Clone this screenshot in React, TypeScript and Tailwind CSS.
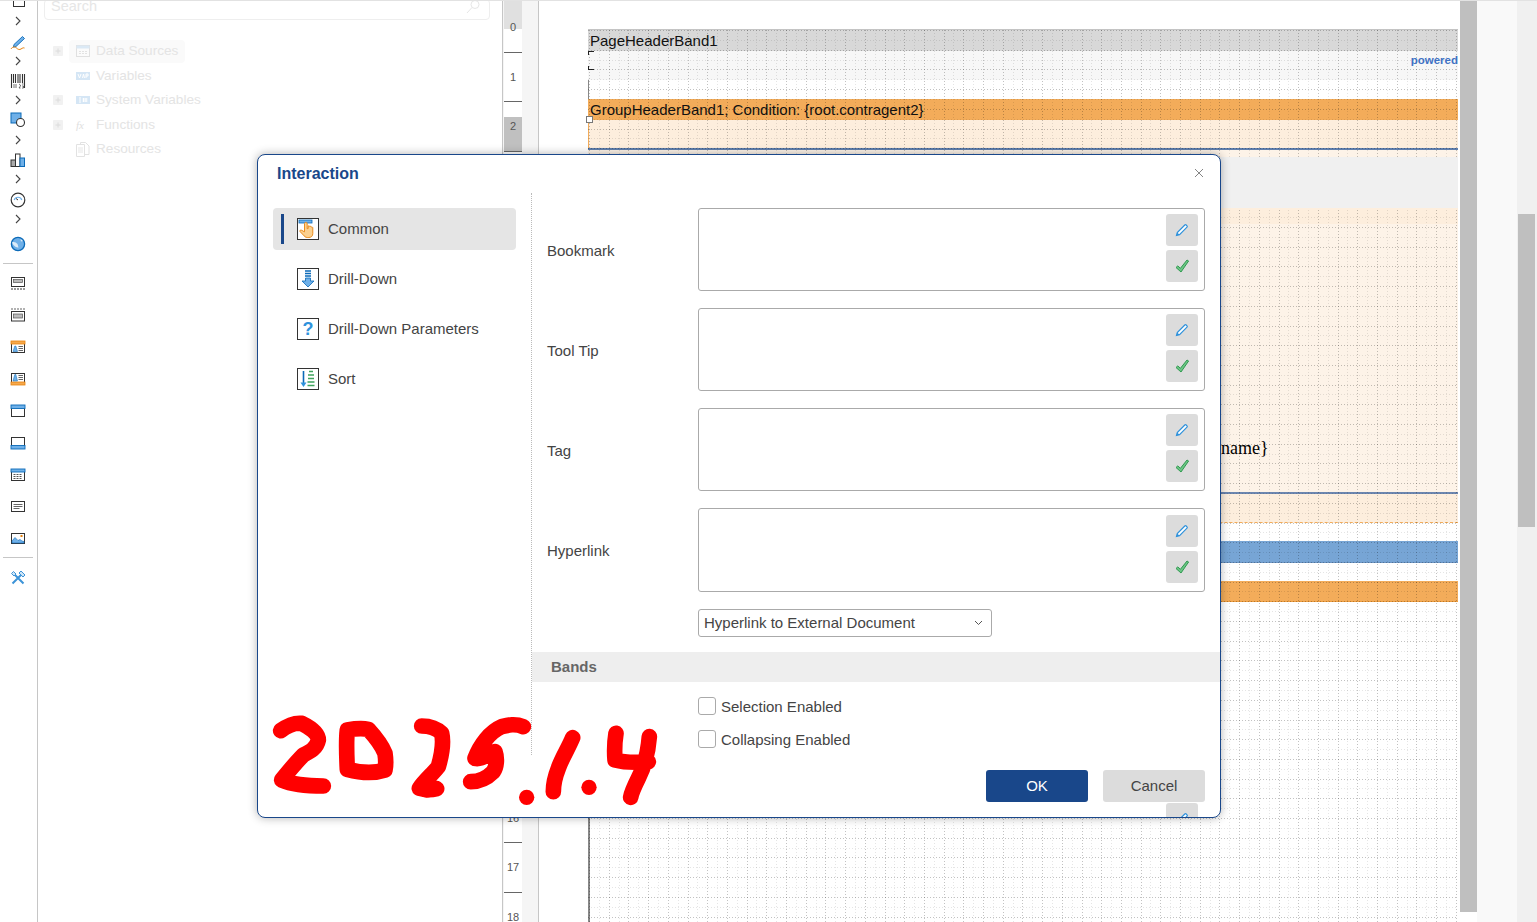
import React from "react";

const font = "font-['Liberation_Sans',Arial,sans-serif]";

function Chevron() {
  return (
    <svg width="8" height="10" viewBox="0 0 8 10" fill="none" className="shrink-0">
      <path d="M2 1l4 4-4 4" stroke="#444" strokeWidth="1.1" />
    </svg>
  );
}
const D = "#333";
const B = "#0b6ab8";
const L = "#6fb0e8";
const O = "#e8820c";

function Ic({ children }: { children: React.ReactNode }) {
  return (
    <svg width="16" height="16" viewBox="0 0 16 16" fill="none" className="block shrink-0">
      {children}
    </svg>
  );
}
const toolTop = (
  <svg width="16" height="16" viewBox="0 0 16 16" fill="none" className="block">
    <rect x="3.5" y="4.5" width="11" height="10" fill="#fff" stroke={D} />
    <path d="M0.5 6v-2.5h3v-3" stroke={D} />
  </svg>
);
const pen = (
  <Ic>
    <path d="M4 9.5L12.5 1.5l2 2L6 11.5l-2.6.6z" fill={L} stroke={B} strokeWidth="0.9" />
    <path d="M1 14c1.5-2.5 4-2.5 5.5-1s3 2 4.5 1 2.5-1.5 3.5-1" stroke={O} strokeWidth="1" />
  </Ic>
);
const barcode = (
  <Ic>
    <path d="M1.5 1v14M3.5 1v9M5.5 1v9M8 1v9M10 1v9M12.5 1v9M14.5 1v14" stroke={D} strokeWidth="1.1" />
    <path d="M4 11v4M6 11v4M9 11l1.4 1v1l-1.4 2h1.5M12 11h1.5M12 13h1.5v2H12" stroke={D} strokeWidth="0.7" />
  </Ic>
);
const shape = (
  <Ic>
    <rect x="1" y="1" width="10" height="10" fill={L} stroke={B} />
    <circle cx="10.5" cy="10.5" r="4" fill="#fff" stroke={D} strokeWidth="1.1" />
  </Ic>
);
const chart = (
  <Ic>
    <rect x="1" y="8" width="4.5" height="6.5" fill="#aaa" stroke={D} />
    <rect x="5.5" y="2" width="4.5" height="12.5" fill="#fff" stroke={D} />
    <rect x="10" y="6" width="4.5" height="8.5" fill={L} stroke={B} />
  </Ic>
);
const gauge = (
  <Ic>
    <circle cx="8" cy="8" r="6.8" stroke={D} strokeWidth="1.2" />
    <path d="M4.2 8a4 4 0 0 1 7.6 0" stroke={L} strokeWidth="1.2" />
    <path d="M8 8L6 6.5" stroke={D} />
  </Ic>
);
const globe = (
  <Ic>
    <circle cx="8" cy="8" r="6.6" fill={L} stroke={B} strokeWidth="1.3" />
    <path d="M2 6.5c2-1 4 0 5.5 1.5l1 3.5c-2 0-5-1-6.5-5z" fill="#dcecf8" />
    <path d="M10.5 3l2.5 2-2 .5z" fill="#dcecf8" />
  </Ic>
);
const bandA = (
  <Ic>
    <rect x="1.5" y="2.5" width="13" height="9" fill="#fff" stroke={D} />
    <rect x="3.5" y="4.5" width="9" height="3" fill="#bbb" stroke="#555" strokeWidth="0.7" />
    <path d="M1 14h14" stroke={D} strokeDasharray="2 1" strokeWidth="1.2" />
  </Ic>
);
const bandB = (
  <Ic>
    <path d="M1 2h14" stroke="#666" strokeDasharray="2 1" strokeWidth="1.2" />
    <rect x="1.5" y="4.5" width="13" height="9.5" fill="#fff" stroke={D} />
    <rect x="3.5" y="7" width="9" height="4" fill="#bbb" stroke="#555" strokeWidth="0.7" />
  </Ic>
);
const cardTop = (
  <Ic>
    <rect x="1.5" y="2.5" width="13" height="11" fill="#fff" stroke={D} />
    <rect x="1" y="2" width="14" height="3" fill="#f5a94e" stroke={O} strokeWidth="0.8" />
    <path d="M3 12.5l1.8-5.5h1L7.5 12.5z" fill={L} stroke={B} strokeWidth="0.5" />
    <path d="M8.5 7.5h4.5M8.5 9.5h4.5M8.5 11.5h4.5" stroke="#666" />
  </Ic>
);
const cardBottom = (
  <Ic>
    <rect x="1.5" y="2.5" width="13" height="11" fill="#fff" stroke={D} />
    <rect x="1" y="11" width="14" height="3" fill="#f5a94e" stroke={O} strokeWidth="0.8" />
    <path d="M3 10l1.8-6.5h1L7.5 10z" fill={L} stroke={B} strokeWidth="0.5" />
    <path d="M8.5 4.5h4.5M8.5 6.5h4.5M8.5 8.5h4.5" stroke="#666" />
  </Ic>
);
const winTop = (
  <Ic>
    <rect x="1.5" y="2.5" width="13" height="11" fill="#fff" stroke={D} />
    <rect x="1" y="2" width="14" height="3.5" fill={L} stroke={B} strokeWidth="0.9" />
  </Ic>
);
const winBottom = (
  <Ic>
    <rect x="1.5" y="2.5" width="13" height="11" fill="#fff" stroke={D} />
    <rect x="1" y="10.5" width="14" height="3.5" fill={L} stroke={B} strokeWidth="0.9" />
  </Ic>
);
const table = (
  <Ic>
    <rect x="1.5" y="2.5" width="13" height="11" fill="#fff" stroke={D} />
    <rect x="1" y="2" width="14" height="3" fill={L} stroke={B} strokeWidth="0.9" />
    <path d="M3.5 7.5h9M3.5 9.5h9M3.5 11.5h9" stroke="#555" strokeDasharray="2 1" />
  </Ic>
);
const textIc = (
  <Ic>
    <rect x="1.5" y="2.5" width="13" height="10" fill="#fff" stroke={D} />
    <path d="M3.5 5.5h9M3.5 7.5h9M3.5 9.5h6" stroke="#666" />
  </Ic>
);
const image = (
  <Ic>
    <rect x="1.5" y="2.5" width="13" height="10" fill="#fff" stroke={D} />
    <path d="M2 12v-2l3-3.5 3 3 2-1 2 1.5 2 .5V12z" fill={L} stroke={B} strokeWidth="0.6" />
    <rect x="10.5" y="4" width="2" height="2" fill={O} />
  </Ic>
);
const tools = (
  <Ic>
    <path d="M2.5 13.5L11 5M13.5 13.5L5 5" stroke="#3d94d8" strokeWidth="2" />
    <path d="M9 3l2-2 4 4-2 2zM1.5 3.5L3.5 1.5 6 4 4 6z" fill="#cfe5f6" stroke="#3d94d8" strokeWidth="1" />
  </Ic>
);

function IconCell({ h, children }: { h: string; children: React.ReactNode }) {
  return <div className={`${h} flex items-center justify-center w-full shrink-0`}>{children}</div>;
}

function Toolbar() {
  return (
    <div className="w-[38px] shrink-0 h-full border-r border-[#c6c6c6] flex flex-col items-center overflow-hidden pr-px">
      <div className="-mt-[8px] h-[16px] shrink-0">{toolTop}</div>
      <IconCell h="h-[26px]"><Chevron /></IconCell>
      <IconCell h="h-[18px]">{pen}</IconCell>
      <IconCell h="h-[18px]"><Chevron /></IconCell>
      <IconCell h="h-[22px]">{barcode}</IconCell>
      <IconCell h="h-[16px]"><Chevron /></IconCell>
      <IconCell h="h-[24px]">{shape}</IconCell>
      <IconCell h="h-[16px]"><Chevron /></IconCell>
      <IconCell h="h-[24px]">{chart}</IconCell>
      <IconCell h="h-[14px]"><Chevron /></IconCell>
      <IconCell h="h-[28px]">{gauge}</IconCell>
      <IconCell h="h-[10px]"><Chevron /></IconCell>
      <IconCell h="h-[39px]">{globe}</IconCell>
      <div className="w-[30px] h-px bg-[#c6c6c6] -ml-px shrink-0" />
      <div className="flex flex-col mt-[3px] w-full">
        {[bandA, bandB, cardTop, cardBottom, winTop, winBottom, table, textIc, image].map((ic, i) => (
          <IconCell key={i} h="h-[32px]">{ic}</IconCell>
        ))}
      </div>
      <div className="w-[30px] h-px bg-[#c6c6c6] -ml-px mt-[2px] shrink-0" />
      <IconCell h="h-[40px]">{tools}</IconCell>
    </div>
  );
}

function Plus() {
  return (
    <svg width="10" height="10" viewBox="0 0 10 10" className="block">
      <rect width="10" height="10" rx="1" fill="#f1f1f1" />
      <path d="M2.5 5h5M5 2.5v5" stroke="#dcdcdc" />
    </svg>
  );
}
const treeIcons: Record<string, React.ReactNode> = {
  ds: (
    <svg width="15" height="13" viewBox="0 0 15 13" fill="none">
      <rect x="0.5" y="0.5" width="13" height="11" fill="#fbfbfb" stroke="#e0e0e0" />
      <rect x="0.5" y="0.5" width="13" height="3" fill="#dbe9f5" />
      <path d="M3 6.5h8M3 8.5h8" stroke="#e2e2e2" strokeDasharray="2 1" />
    </svg>
  ),
  v: (
    <svg width="15" height="10" viewBox="0 0 15 10">
      <rect width="14" height="8" y="1" fill="#d5e6f5" />
      <path d="M2 3l1.5 4L5 3M6.5 7l1-4 1 4M10 7V3h2v2h-2" stroke="#fff" fill="none" />
    </svg>
  ),
  sv: (
    <svg width="15" height="10" viewBox="0 0 15 10">
      <rect width="14" height="8" y="1" fill="#d5e6f5" />
      <path d="M3 3h2M3 5h2M3 7h2M7.5 3v4M10 3v4M6.5 4h5M6.5 6h5" stroke="#fff" fill="none" />
    </svg>
  ),
  fx: <span className="font-['Liberation_Serif',serif] italic text-[11px] text-[#e0e0e0]">fx</span>,
  res: (
    <svg width="14" height="15" viewBox="0 0 14 15" fill="none">
      <path d="M4.5 2.5v-2h5l3.5 3.5v8.5h-4M0.5 2.5h8v12h-8z" stroke="#e2e2e2" />
      <path d="M2 6h5M2 8h5M2 10h5" stroke="#e6e6e6" />
    </svg>
  ),
};

function TreeRow({ plus, icon, label, selected }: { plus?: boolean; icon: string; label: string; selected?: boolean }) {
  return (
    <div className="h-[24.5px] flex items-center relative">
      <div className="w-[10px] ml-[15px] shrink-0">{plus && <Plus />}</div>
      <div className={`ml-[6px] h-[23px] pl-[7px] pr-[7px] flex items-center rounded-sm ${selected ? "bg-[#fafafa]" : ""}`}>
        <div className="w-[20px] shrink-0 flex items-center">{treeIcons[icon]}</div>
        <span className="text-[13.6px] text-[#e4e4e4]">{label}</span>
      </div>
    </div>
  );
}

function SidePanel() {
  return (
    <div className="w-[464px] shrink-0 h-full relative">
      <div className="ml-[6px] mr-[12px] h-[21px] border border-[#eeeeee] rounded-[4px] flex items-center justify-between pl-[6px] pr-[8px] -mt-px pb-[5px] overflow-hidden">
        <span className="text-[14.5px] text-[#e6e6e6]">Search</span>
        <svg width="16" height="16" viewBox="0 0 16 16" fill="none">
          <circle cx="10" cy="5.5" r="4" stroke="#e6e6e6" />
          <path d="M7 8.5L2 14" stroke="#e6e6e6" />
        </svg>
      </div>
      <div className="pt-[19px]">
        <TreeRow plus icon="ds" label="Data Sources" selected />
        <TreeRow icon="v" label="Variables" />
        <TreeRow plus icon="sv" label="System Variables" />
        <TreeRow plus icon="fx" label="Functions" />
        <TreeRow icon="res" label="Resources" />
      </div>
    </div>
  );
}

function Ruler() {
  const cells = Array.from({ length: 19 }, (_, i) => i);
  return (
    <div className="w-[37px] shrink-0 h-full border-l border-r border-[#c6c6c6] bg-[#f5f5f5] flex overflow-hidden">
      <div className="w-[18px] ml-px bg-white h-full flex flex-col shrink-0">
        {cells.map((i) => (
          <div
            key={i}
            className={`shrink-0 flex items-center justify-center text-[11px] text-[#555] border-b border-[#666] ${
              i === 0 ? "h-[53px] pt-[3px] bg-[linear-gradient(#e0e0e0_29px,#fff_29px)]" : "h-[49.4px]"
            } ${i === 2 ? "bg-[linear-gradient(#fff_15px,#c0c0c0_15px)]" : ""}`}
          >
            {i}
          </div>
        ))}
      </div>
    </div>
  );
}

function Band({ h, className, children }: { h: string; className: string; children?: React.ReactNode }) {
  return <div className={`${h} shrink-0 w-full relative ${className}`}>{children}</div>;
}

function GridLines() {
  const n = 92;
  const minor = Array.from({ length: n }, (_, i) => i);
  return (
    <svg className="absolute inset-0 pointer-events-none" width="870" height="893" fill="none" shapeRendering="crispEdges">
      {minor.map((i) => {
        const p = Math.round(i * 9.85) + 0.5;
        const op = i % 2 === 0 ? 0.24 : 0.1;
        return (
          <g key={i} stroke="#000" strokeOpacity={op} strokeDasharray="1 2">
            <line x1={p + 1} y1="0" x2={p + 1} y2="893" />
            <line x1="0" y1={p} x2="870" y2={p} />
          </g>
        );
      })}
    </svg>
  );
}

function ReportPage() {
  return (
    <div className="absolute left-[49px] top-[29px] w-[870px] h-[893px] overflow-hidden border-t border-[#c4c4c4] isolate">
      <div className="flex flex-col h-full font-['Liberation_Sans',Arial,sans-serif]">
        <Band h="h-[21px]" className="bg-[#d8d8d8] text-[15px] leading-[21px] text-[#111] pl-[2px]">PageHeaderBand1</Band>
        <Band h="h-[29px]" className="bg-[#f7f7f7]">
          <div className="absolute right-0 top-[3px] text-[11.5px] font-bold text-[#3f72c4] leading-[13px] z-10">powered</div>
          <div className="absolute left-0 top-0 w-[6px] h-[4px] border-l border-t border-[#222]" />
          <div className="absolute left-0 top-[15px] w-[6px] h-[4px] border-l border-b border-[#222]" />
        </Band>
        <Band h="h-[19px]" className="bg-white border-l border-[#888]" />
        <Band h="h-[21px]" className="bg-[#f3ac5a] text-[15px] leading-[21px] text-[#111] pl-[2px]">GroupHeaderBand1; Condition: {"{root.contragent2}"}</Band>
        <Band h="h-[28px]" className="bg-[#fdeedd] border-l border-[#f3ac5a]" />
        <Band h="h-[2px]" className="bg-[#5f7fae]" />
        <Band h="h-[7px]" className="bg-[#fdf3e8]" />
        <Band h="h-[51px]" className="bg-[#f0f0f0] z-10" />
        <Band h="h-[16px]" className="bg-[#fdeedd]" />
        <Band h="h-[268px]" className="bg-[#fdf3e8]">
          <div className="absolute left-[633px] top-[212px] text-[18px] leading-[24px] text-black font-['Liberation_Serif',serif] whitespace-nowrap z-10">name{"}"}</div>
        </Band>
        <Band h="h-[2px]" className="bg-[#6d87b0]" />
        <Band h="h-[29px]" className="bg-[#fdeedd] border-b border-dashed border-[#f3ac5a]" />
        <Band h="h-[18px]" className="bg-white" />
        <Band h="h-[22px]" className="bg-[#77a5d5] border-b border-[#6b96c6]" />
        <Band h="h-[18px]" className="bg-white" />
        <Band h="h-[21px]" className="bg-[#f3ac5a] border-b border-[#ee9d3f]" />
        <div className="flex-1 bg-white border-l-2 border-[#888]" />
      </div>
      <GridLines />
    </div>
  );
}

const smallPencil = (
  <svg width="14" height="14" viewBox="0 0 14 14" fill="none">
    <path d="M1.5 12.5l.8-3L9.8 2a1 1 0 0 1 1.4 0l.8.8a1 1 0 0 1 0 1.4L4.5 11.7z" fill="#fff" stroke="#2f92dc" strokeWidth="1.2" />
    <path d="M1.5 12.5l.8-3 2.2 2.2z" fill="#2f92dc" />
  </svg>
);
const smallCheck = (
  <svg width="15" height="15" viewBox="0 0 15 15" fill="none">
    <path d="M1 8.5l1.8-1.600 2.600 2.400L12 1l1.600 1L6 13z" fill="#6cc585" stroke="#2f9a50" strokeWidth="1" />
  </svg>
);

function FieldRow({ label, h, pt }: { label: string; h: string; pt: string }) {
  return (
    <div className={`flex items-center ${h} mb-[17px]`}>
      <div className="w-[151px] shrink-0 text-[15px] text-[#444] pt-[3px]">{label}</div>
      <div className={`flex-1 h-full border border-[#aaaaaa] rounded-[3px] flex justify-end ${pt} pr-[6px]`}>
        <div className="flex flex-col gap-[4px]">
          <div className="w-[32px] h-[32px] rounded-[3px] bg-[#dcdcdc] flex items-center justify-center">{smallPencil}</div>
          <div className="w-[32px] h-[32px] rounded-[3px] bg-[#dcdcdc] flex items-center justify-center">{smallCheck}</div>
        </div>
      </div>
    </div>
  );
}

function Box({ children }: { children: React.ReactNode }) {
  return (
    <svg width="22" height="22" viewBox="0 0 22 22" fill="none" className="block shrink-0">
      <rect x="0.5" y="0.5" width="21" height="21" fill="#fff" stroke="#333" />
      {children}
    </svg>
  );
}
const menuIcons: React.ReactNode[] = [
  <Box key="0">
    <rect x="2" y="2" width="13" height="3" fill="#6fb0e8" stroke="#0b6ab8" strokeWidth="0.8" />
    <path d="M9 4.500c.8 0 1.200.5 1.200 1.200v5l1-.2V8c1-.6 1.500 0 1.500.6.7-.5 1.500-.2 1.500.5.8-.4 1.600 0 1.600.9v5.500c0 2.500-1.500 4-4 4h-1.500c-1.800 0-2.800-1-3.800-2.300L3 13.500c-.6-1 .7-2 1.700-1.200l2.800 1.500V5.700c0-.7.7-1.200 1.500-1.200z" fill="#fbd08f" stroke="#e8820c" strokeWidth="0.9" />
  </Box>,
  <Box key="1">
    <path d="M8 3h6M8 5.500h6M8 8h6" stroke="#0b6ab8" strokeWidth="1.300" />
    <path d="M8.500 10v3H5l6 6 6-6h-3.500v-3z" fill="#6fb0e8" stroke="#0b6ab8" strokeWidth="0.8" />
  </Box>,
  <Box key="2">
    <text x="11" y="17" textAnchor="middle" fontSize="18" fontWeight="700" fill="#2f92dc" fontFamily="Liberation Sans, sans-serif">?</text>
  </Box>,
  <Box key="3">
    <path d="M6.500 3v13" stroke="#0b6ab8" strokeWidth="1.600" />
    <path d="M3.500 14.500l3 4.500 3-4.500z" fill="#2f92dc" />
    <path d="M12 3.500h4M11 7h6M11 10.500h6M10.500 14h7M10.500 17.500h7" stroke="#3fa35c" strokeWidth="1.600" />
  </Box>,
];

function MenuItem({ label, icon, active }: { label: string; icon: React.ReactNode; active?: boolean }) {
  return (
    <div className={`h-[42px] mb-[8px] rounded-[4px] flex items-center pl-[24px] relative ${active ? "bg-[#e5e5e5]" : ""}`}>
      {active && <div className="absolute left-[8px] top-[6px] w-[3px] h-[30px] bg-[#19478a]" />}
      {icon}
      <span className="ml-[9px] text-[15px] text-[#444]">{label}</span>
    </div>
  );
}

function Check({ label }: { label: string }) {
  return (
    <div className="flex items-center h-[18px]">
      <div className="w-[18px] h-[18px] border border-[#aaaaaa] rounded-[3px] bg-white" />
      <span className="ml-[5px] text-[15px] text-[#444] pt-[2px]">{label}</span>
    </div>
  );
}

function Dialog() {
  return (
    <div className="absolute left-[257px] top-[154px] w-[964px] h-[664px] bg-white border border-[#19478a] rounded-[8px] shadow-[0_0_10px_rgba(0,0,0,0.3)] overflow-hidden flex flex-col">
      <div className="h-[38px] shrink-0 flex items-center justify-between pl-[19px] pr-[16px]">
        <span className="text-[16px] font-bold text-[#19478a]">Interaction</span>
        <svg width="10" height="10" viewBox="0 0 10 10" fill="none" className="-mt-[2px]">
          <path d="M1 1l8 8M9 1l-8 8" stroke="#777" strokeWidth="0.9" />
        </svg>
      </div>
      <div className="flex h-[562px] shrink-0">
        <div className="w-[274px] shrink-0 border-r border-dotted border-[#bbbbbb] pt-[15px] pl-[15px] pr-[15px]">
          <MenuItem active label="Common" icon={menuIcons[0]} />
          <MenuItem label="Drill-Down" icon={menuIcons[1]} />
          <MenuItem label="Drill-Down Parameters" icon={menuIcons[2]} />
          <MenuItem label="Sort" icon={menuIcons[3]} />
        </div>
        <div className="flex-1 flex flex-col pt-[15px]">
          <div className="pl-[15px] pr-[15px]">
            <FieldRow label="Bookmark" h="h-[83px]" pt="pt-[5px]" />
            <FieldRow label="Tool Tip" h="h-[83px]" pt="pt-[5px]" />
            <FieldRow label="Tag" h="h-[83px]" pt="pt-[5px]" />
            <FieldRow label="Hyperlink" h="h-[84px]" pt="pt-[6px]" />
            <div className="ml-[151px] w-[294px] h-[28px] border border-[#aaaaaa] rounded-[3px] flex items-center justify-between pl-[5px] pr-[8px]">
              <span className="text-[15px] text-[#444]">Hyperlink to External Document</span>
              <svg width="9" height="6" viewBox="0 0 9 6" fill="none">
                <path d="M1 1l3.500 3.500L8 1" stroke="#555" strokeWidth="1" />
              </svg>
            </div>
          </div>
          <div className="mt-[15px] h-[30px] bg-[#eeeeee] flex items-center pl-[19px] text-[15px] font-bold text-[#666] shrink-0">Bands</div>
          <div className="pl-[166px] pt-[15px] flex flex-col gap-[15px]">
            <Check label="Selection Enabled" />
            <Check label="Collapsing Enabled" />
          </div>
        </div>
      </div>
      <div className="flex-1 relative flex justify-end gap-[15px] pr-[15px] pt-[15px] overflow-hidden">
        <div className="w-[102px] h-[32px] rounded-[3px] bg-[#19478a] text-white text-[15px] flex items-center justify-center">OK</div>
        <div className="w-[102px] h-[32px] rounded-[3px] bg-[#dcdcdc] text-[#444] text-[15px] flex items-center justify-center">Cancel</div>
        <div className="absolute right-[22px] top-[48px] w-[32px] h-[32px] rounded-[3px] bg-[#dcdcdc] flex items-center justify-center">{smallPencil}</div>
      </div>
    </div>
  );
}

function Scribble() {
  const strokes = [
    "M62 122C85 105 105 98 125 100C150 112 175 130 175 150C170 175 150 185 130 195C105 220 85 245 65 270C100 285 150 288 190 288",
    "M262 120C285 116 310 115 325 118C345 140 365 165 375 190C378 210 378 225 375 240C345 250 300 248 262 238C260 200 258 155 262 120Z",
    "M485 108C505 108 530 115 545 130C552 160 545 195 535 230C520 250 495 270 478 295C495 300 515 300 530 296",
    "M790 110C765 100 745 105 725 110C690 125 660 165 645 205C665 210 685 190 705 185C712 205 710 230 700 245C680 265 660 275 632 275",
    "M938 143C925 175 905 205 895 235C885 260 880 285 880 305",
    "M1068 130C1064 155 1063 185 1065 210C1095 218 1130 218 1165 215M1168 140C1165 180 1155 225 1135 265C1125 285 1115 305 1112 322",
  ];
  return (
    <svg className="absolute left-[260px] top-[690px] pointer-events-none" width="420" height="140" viewBox="0 0 1260 420" fill="none">
      {strokes.map((d, i) => (
        <path key={i} d={d} stroke="#ff0000" strokeWidth="47" strokeLinecap="round" strokeLinejoin="round" />
      ))}
      <circle cx="500" cy="295" r="28" fill="#ff0000" />
      <circle cx="800" cy="322" r="23" fill="#ff0000" />
      <circle cx="987" cy="292" r="23" fill="#ff0000" />
    </svg>
  );
}

export default function App() {
  return (
    <div className={`relative w-[1537px] h-[922px] overflow-hidden bg-white ${font}`}>
      <div className="flex h-full">
        <Toolbar />
        <SidePanel />
        <Ruler />
        <div className="relative w-[921px] shrink-0 h-full bg-white">
          <ReportPage />
          <div className="absolute left-[47px] top-[116px] w-[7px] h-[7px] bg-white border border-[#777]" />
        </div>
        <div className="w-[17px] shrink-0 h-[912px] bg-[#bfbfbf]" />
        <div className="w-[40px] shrink-0 h-full bg-[#f9f9f9]" />
        <div className="w-[20px] shrink-0 h-full bg-[#f0f0f0] pl-px pt-[214px]">
          <div className="w-[17px] h-[313px] bg-[#bfbfbf]" />
        </div>
      </div>
      <div className="absolute left-0 top-0 w-full h-px bg-[#e2e2e2]" />
      <Dialog />
      <Scribble />
    </div>
  );
}
